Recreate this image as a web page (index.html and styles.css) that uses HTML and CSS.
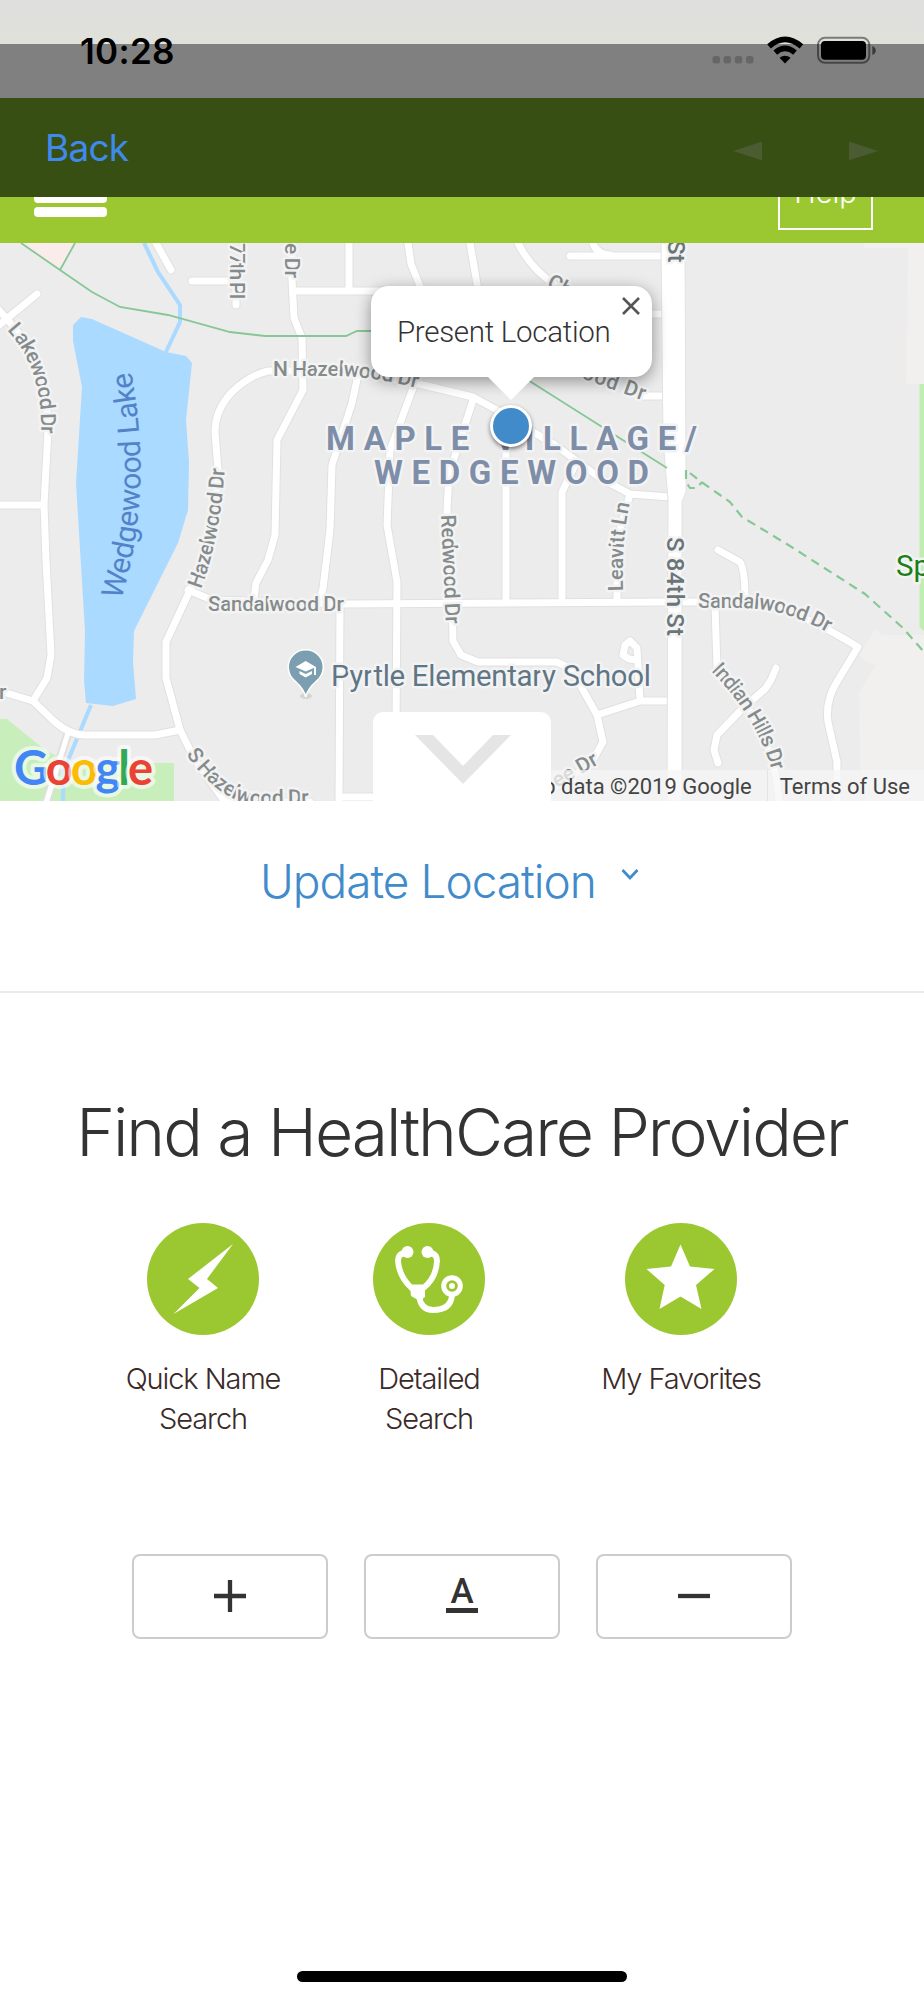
FILE: index.html
```html
<!DOCTYPE html>
<html lang="en">
<head>
  <meta charset="UTF-8" />
  <meta name="viewport" content="width=device-width, initial-scale=1" />
  <title>Find a HealthCare Provider</title>
  <link rel="stylesheet" href="styles.css">
</head>
<body>

  <div class="status-bar">
    <span class="time">10:28</span>
    <svg class="status-icons" width="166" height="30" viewBox="712 35 166 30">
      <g fill="#666">
        <rect x="712.5" y="56" width="7.5" height="7.5" rx="2.5" />
        <rect x="723.5" y="56" width="7.5" height="7.5" rx="2.5" />
        <rect x="734.8" y="56" width="7.5" height="7.5" rx="2.5" />
        <rect x="746" y="56" width="7.5" height="7.5" rx="2.5" />
      </g>
      <path d="M769 46.3 Q785 32.5 801.4 46.3 M775.3 52.6 Q785 44.2 795 52.6" fill="none" stroke="#000" stroke-width="5.6" />
      <path d="M779.5 57.8 Q785 53.6 790.6 57.8 L785 63.4 Z" />
      <rect x="818" y="37.8" width="51.3" height="25" rx="7" fill="none" stroke="#000" stroke-opacity=".45" stroke-width="2" />
      <rect x="821" y="41" width="45" height="18.8" rx="4" />
      <path d="M872.3 46 Q875.8 47.5 875.8 50.5 T872.3 55 Z" fill-opacity=".55" />
    </svg>
  </div>

  <div class="nav-bar">
    <a class="back">Back</a>
    <svg width="147" height="20" viewBox="732 141 147 20" fill="#4b5c33">
      <path d="M733 151 L762 141.5 V160.3 Z" />
      <path d="M878 151 L849 141.5 V160.3 Z" />
    </svg>
  </div>

  <header class="site-header">
    <div class="menu"><span></span><span></span><span></span></div>
    <a class="help">Help</a>
  </header>

  <div class="map">
    <svg class="map-canvas" width="924" height="558" viewBox="0 243 924 558">
      <defs>
        <path id="p-lakewood" d="M7 330 Q43 368 41 434" />
        <path id="p-hazel" d="M201 589 Q221 535 225 465" />
        <path id="p-nhazel" d="M273 376 L340 376 Q382 378 420 389" />
        <path id="p-shazel" d="M186 754 Q222 806 262 805 L330 804" />
        <path id="p-sandal2" d="M698 608 L740 608 Q785 608 830 634" />
        <path id="p-indian" d="M711 671 Q764 725 775 785" />
        <path id="p-lake" d="M121 600 Q155 490 130 366" />
        <path id="p-leavitt" d="M623 591 Q621 540 631 498" />
        <!-- every street once, drawn as casing and as fill -->
        <g id="streets">
          <path d="M156 243 L171 270 M192 281 H236 V305 M-2 326 L37 294 M-2 309 L12 325 Q48 365 48 430 L44 505 L46 560 L51 655 L47 678 L33 701 M0 505 H44" />
          <path d="M0 691 L33 701 L55 722 Q70 735 85 735 H155 L180 730" />
          <path d="M280 371 H268 Q250 375 232 392 Q215 410 215 432 L218 470 Q216 540 190 590 L166 642 V678 L180 730 L195 760 L225 802 H310" />
          <path d="M292 243 V280 L294 318 L302 338 L303 390 L277 440 L275 535 L268 560 L256 583 L254 598 M295 291 H430 M349 243 V291" />
          <path d="M408 243 L411 264 L420 286 M470 243 L478 290 M518 243 Q530 268 555 285 M593 243 Q596 254 610 255 M570 256 H664 M640 314 H664 M640 396 H664" />
          <path d="M275 371 H340 L415 383 L473 397 L495 409 L555 445 L600 478 L630 494 L670 497" />
          <path d="M358 375 L352 403 L332 465 L330 530 L323 588 L320 601 M413 388 L390 450 L387 525 L397 582 L396 730 M473 400 L449 474 L447 510 L452 600 L453 641 L461 655 L478 662 H557 L571 669 L583 690 L597 715 L603 742 L590 765 L550 790" />
          <path d="M506 448 V602 M575 465 L562 492 V602 M617 602 V540 L630 494" />
          <path d="M188 590 L212 600 L343 604 L667 602 H745 Q790 605 858 647 L838 680 Q825 700 828 722 L837 762 V802 M718 550 L740 562 Q745 570 745 600 M715 605 L717 668 Q775 730 779 802" />
          <path d="M776 668 L771 680 L765 689 L740 711 L717 735 L714 750 L718 763 M597 715 L640 701 H670 M640 701 L637 648 L630 641 L625 645 L623 655 L629 659 L636 660 M340 604 L339 802 M339 797 H380" />
        </g>
      </defs>

      <rect y="243" width="924" height="558" fill="#ececec" />
      <path d="M21 243 L60 270 L75 243 Z" fill="#fbecec" />
      <path d="M864 243 H924 V384 H906 L908 248 H864 Z M875 629 L882 635 H924 V801 H867 L860 765 L859 693 L875 666 L859 656 Z" fill="#f1f0ef" />
      <path d="M919.500 384 H924 V631 L919.500 627 Z" fill="#bfeeb0" />
      <path d="M0 719 H7 L45 750 L70 763 H174 V801 H0 Z" fill="#c8eebb" />
      <path d="M144 243 L158 272 L180 305 V322 L166 352 M91 705 L64 770 L63 801" fill="none" stroke="#aadaff" stroke-width="4" />
      <path d="M73 325 L81 317 L92 319 L166 352 L186 356 L192 363 L186 420 L189 462 L188 510 L178 543 L134 631 L133 662 L136 699 L113 706 L86 703 L84 680 L85 631 L76 483 L82 387 L73 341 Z" fill="#aadaff" />

      <use href="#streets" class="street-casing" />
      <path d="M68 733 L46 803" class="street-casing" />
      <use href="#streets" class="street" />
      <path d="M68 733 L46 803" class="street thin" />
      <path d="M661 243 H685 L686 470 L686 492 L682 502 V801 H667 L668 500 L663 440 Z" fill="#fff" stroke="#e2e2e2" />

      <g fill="none" stroke="#87c795" stroke-width="1.8">
        <path d="M75 243 L60 270 M21 243 L60 270 L92 292 L120 307 L168 315 L230 332 L265 336 H346 L357 331 H420 M520 375 L667 468" />
        <path d="M686 470 V482 L690 488 L697 488 L702 482 M690 473 L700 481 L730 502 L742 517 L762 529 L790 546 L865 594 L903 628 L924 652" stroke-width="2.2" stroke-dasharray="9 6" />
      </g>

      <g class="label">
        <text><textPath href="#p-lakewood" textLength="112">Lakewood Dr</textPath></text>
        <text><textPath href="#p-hazel" textLength="123">Hazelwood Dr</textPath></text>
        <text><textPath href="#p-nhazel" textLength="145">N Hazelwood Dr</textPath></text>
        <text><textPath href="#p-shazel" textLength="142">S Hazelwood Dr</textPath></text>
        <text x="208" y="611" textLength="136">Sandalwood Dr</text>
        <text><textPath href="#p-sandal2" textLength="134">Sandalwood Dr</textPath></text>
        <text><textPath href="#p-indian" textLength="118">Indian Hills Dr</textPath></text>
        <text><textPath href="#p-leavitt" textLength="88">Leavitt Ln</textPath></text>
        <text transform="translate(441 515) rotate(87.500)" textLength="109">Redwood Dr</text>
        <text transform="translate(230 243) rotate(90)" textLength="56">77th Pl</text>
        <text transform="translate(285 243) rotate(90)" textLength="35">e Dr</text>
        <text transform="translate(546 286) rotate(28)">Ch</text>
        <text transform="translate(581 378) rotate(20)" textLength="66">ood Dr</text>
        <text transform="translate(557 788) rotate(-30)">ee Dr</text>
        <text x="-1" y="699">r</text>
      </g>
      <g class="label main">
        <text transform="translate(667 537) rotate(90)" textLength="99">S 84th St</text>
        <text transform="translate(668 240) rotate(90)">St</text>
      </g>
      <text class="lake-label"><textPath href="#p-lake" textLength="231">Wedgewood Lake</textPath></text>
      <g class="area-label">
        <text x="326" y="450" textLength="371">MAPLE VILLAGE/</text>
        <text x="374" y="483.500" textLength="275">WEDGEWOOD</text>
      </g>

      <ellipse cx="306" cy="696" rx="6" ry="3" fill="#d4d4d4" />
      <path d="M305.700 697 Q304 689 295 681 A17.500 17.500 0 1 1 316.500 681 Q307.500 689 305.700 697 Z" fill="#7b9eb0" stroke="#fff" stroke-width="1.500" />
      <path d="M295.500 667 L305.700 661 L316 667 L305.700 671.500 Z M299.500 671 L305.700 674 L312 671 V674 L305.700 677.500 L299.500 674 Z M314 667 H316 V675 H314 Z" fill="#fff" />
      <text class="poi-label" x="331" y="686" textLength="320">Pyrtle Elementary School</text>
      <text class="poi-label park" x="896" y="576">Sp</text>
      <text class="google" x="14" y="784.500" textLength="139"><tspan fill="#4285f4">G</tspan><tspan fill="#ea4335">o</tspan><tspan fill="#fbbc05">o</tspan><tspan fill="#4285f4">g</tspan><tspan fill="#34a853">l</tspan><tspan fill="#ea4335">e</tspan></text>
    </svg>

    <div class="marker"></div>

    <div class="popup">
      Present Location
      <svg class="popup-close" width="18" height="18" viewBox="0 0 18 18">
        <path d="M1 1 L17 17 M17 1 L1 17" stroke="#555" stroke-width="2.600" />
      </svg>
    </div>

    <div class="credits">
      <span class="data">Map data ©2019 Google</span>
      <span class="terms">Terms of Use</span>
    </div>

    <div class="map-toggle">
      <svg width="96" height="49" viewBox="0 0 96 49">
        <path d="M0 0 H18 L48 31 L78 0 H96 L48 49 Z" fill="#e5e5e5" />
      </svg>
    </div>
  </div>

  <div class="update-location">
    <a>Update Location</a>
    <svg width="18" height="13" viewBox="0 0 18 13">
      <path d="M1.500 2 L9 10 L16.500 2" fill="none" stroke="#428bca" stroke-width="2.800" />
    </svg>
  </div>

  <h1>Find a HealthCare Provider</h1>

  <div class="options">
    <a class="option quick">
      <svg width="112" height="112" viewBox="0 0 112 112">
        <circle cx="56" cy="56" r="56" />
        <path d="M86 21 L60 56 L71 65 L26.500 91 L52.500 65 L41 56 Z" fill="#fff" />
      </svg>
      <span>Quick Name Search</span>
    </a>
    <a class="option detailed">
      <svg width="112" height="112" viewBox="0 0 112 112">
        <circle cx="56" cy="56" r="56" />
        <g fill="none" stroke="#fff" stroke-width="5.800">
          <path d="M34 29.500 Q25 30 25 38 Q26 53 38 64.500 H51 Q63 55 64 38 Q64 30 55 29.500" />
          <path d="M46 73 Q48 87 60 87 Q78 87 79 72" />
          <circle cx="79" cy="63" r="8.300" stroke-width="5" />
        </g>
        <path d="M37 64 H52 V74 L47 78 L38 73 Z" fill="#fff" />
        <circle cx="34.500" cy="29" r="6" class="white" />
        <circle cx="54.500" cy="29" r="6" class="white" />
        <circle cx="79" cy="63" r="3" class="white" />
      </svg>
      <span>Detailed Search</span>
    </a>
    <a class="option favorites">
      <svg width="112" height="112" viewBox="0 0 112 112">
        <circle cx="56" cy="56" r="56" />
        <path d="M55.500 21.500 L65 43.500 L89.500 46 L71 62 L76.500 86 L55.500 73.500 L34.500 86 L39.700 62 L21.500 46 L46 43.500 Z" fill="#fff" />
      </svg>
      <span>My Favorites</span>
    </a>
  </div>

  <div class="font-size">
    <button>
      <svg width="32" height="32" viewBox="0 0 32 32"><path d="M0 16 H32 M16 0 V32" stroke="#333" stroke-width="4.300" /></svg>
    </button>
    <button>
      <span class="letter">A</span>
    </button>
    <button>
      <svg width="32" height="32" viewBox="0 0 32 32"><path d="M0 16 H32" stroke="#333" stroke-width="4.300" /></svg>
    </button>
  </div>

  <div class="home-indicator"></div>

</body>
</html>
```
FILE: styles.css
```css
* {
  box-sizing: border-box;
}
body {
  margin: 0;
  height: 2000px;
  display: flex;
  flex-direction: column;
  font-family: Inter, "Liberation Sans", sans-serif;
  font-weight: 300;
  background: #fff;
  color: #333;
}
svg {
  display: block;
  flex: none;
}
.status-bar {
  height: 98px;
  display: flex;
  justify-content: space-between;
  align-items: flex-start;
  padding: 35px 46px 0 80px;
  background: linear-gradient(#dfdfdf 0, #dfe1d9 44.500px, #808080 44.500px, #808080 98px);
}
.time {
  font-size: 35px;
  line-height: 32px;
  font-weight: 600;
  letter-spacing: .3px;
  color: #000;
}
.nav-bar {
  height: 99px;
  display: flex;
  justify-content: space-between;
  align-items: center;
  padding: 6px 45px 0 45px;
  background: #384f14;
}
.back {
  font-size: 37px;
  line-height: 40px;
  font-weight: 400;
  letter-spacing: -.8px;
  margin-top: -6px;
  color: #3f8aec;
}
.site-header {
  height: 46px;
  display: flex;
  justify-content: space-between;
  align-items: flex-end;
  padding: 0 51px 13px 34px;
  background: #9bc831;
  overflow: hidden;
}
.menu {
  display: flex;
  flex-direction: column;
  gap: 4px;
  padding-bottom: 13px;
}
.menu span {
  width: 73px;
  height: 10px;
  border-radius: 4px;
  background: #fff;
}
.help {
  width: 95px;
  height: 70px;
  flex: none;
  border: 2px solid #fff;
  color: #fff;
  font-size: 29px;
  line-height: 61px;
  text-align: center;
}

/* map */
.map {
  position: relative;
  height: 558px;
  overflow: hidden;
  font-family: Roboto, sans-serif;
}
.street-casing,
.street {
  fill: none;
  stroke-linecap: round;
  stroke-linejoin: round;
}
.street-casing {
  stroke: #e0e0e0;
  stroke-width: 9px;
}
.street {
  stroke: #fff;
  stroke-width: 7px;
}
.street.thin {
  stroke-width: 5px;
}
.map-canvas text {
  paint-order: stroke;
  stroke: #f3f3f3;
  stroke-width: 5px;
  stroke-linejoin: round;
}
.label {
  font-size: 21px;
  font-weight: 500;
  fill: #858b8c;
}
.label.main {
  font-size: 24px;
  fill: #6a7579;
}
.map-canvas .lake-label {
  font-size: 30px;
  font-weight: 400;
  fill: #5283c9;
  stroke: none;
}
.area-label {
  font-size: 33px;
  font-weight: 700;
  fill: #7e8ea8;
}
.poi-label {
  font-size: 29.500px;
  font-weight: 400;
  fill: #5f7686;
}
.poi-label.park {
  fill: #188018;
}
.map-canvas .google {
  font-family: Lato, sans-serif;
  font-size: 47px;
  font-weight: 700;
  stroke: rgba(255, 255, 255, .6);
  stroke-width: 8px;
}
.marker {
  position: absolute;
  left: 490px;
  top: 162px;
  width: 42px;
  height: 42px;
  border: 3px solid #fff;
  border-radius: 50%;
  background: #428bca;
  box-shadow: 0 2px 4px rgba(0, 0, 0, .5);
}
.popup {
  position: absolute;
  left: 371px;
  top: 43px;
  width: 281px;
  height: 91px;
  border-radius: 18px;
  padding-left: 26px;
  background: #fff;
  font-size: 29.500px;
  letter-spacing: -.3px;
  line-height: 92px;
  white-space: nowrap;
  box-shadow: 0 4px 16px rgba(0, 0, 0, .4);
}
.popup::after {
  content: "";
  position: absolute;
  left: 116px;
  top: 90px;
  border: 24px solid transparent;
  border-top-color: #fff;
  border-bottom: 0;
}
.popup-close {
  position: absolute;
  right: 12px;
  top: 11px;
}
.credits {
  position: absolute;
  right: 0;
  bottom: 0;
  height: 31px;
  display: flex;
  background: rgba(245, 245, 245, .75);
  color: #444;
  font-size: 22px;
  font-weight: 400;
  line-height: 34px;
  white-space: nowrap;
}
.credits .data {
  padding: 0 15px 0 12px;
  border-right: 1px solid #e4e4e4;
}
.credits .terms {
  padding: 0 14px 0 12px;
}
.map-toggle {
  position: absolute;
  left: 373px;
  bottom: 0;
  width: 178px;
  height: 89px;
  padding: 23px 42px 0;
  border-radius: 10px 10px 0 0;
  background: #fff;
}

.update-location {
  height: 192px;
  display: flex;
  padding: 53px 0 0 260px;
  border-bottom: 2px solid #eaeaea;
  font-size: 46px;
  line-height: 54px;
  letter-spacing: -1px;
  color: #428bca;
}
.update-location svg {
  margin: 14px 0 0 25px;
}
h1 {
  margin: 99px 0 0;
  font-size: 66px;
  font-weight: 300;
  line-height: 80px;
  letter-spacing: -2.050px;
  text-align: center;
  white-space: nowrap;
}
.options {
  display: flex;
  margin-top: 51px;
  height: 260px;
  padding-left: 113px;
}
.option {
  display: flex;
  flex-direction: column;
  align-items: center;
  gap: 24px;
  font-size: 29px;
  line-height: 40px;
  letter-spacing: -1.100px;
  text-align: center;
  color: #3b2a28;
}
.option svg {
  fill: #9bc831;
}
.option .white {
  fill: #fff;
}
.quick {
  width: 180px;
}
.detailed {
  width: 110px;
  margin-left: 81px;
}
.favorites {
  width: 180px;
  margin-left: 107px;
}
.font-size {
  display: flex;
  justify-content: center;
  gap: 36px;
  margin-top: 71px;
}
.font-size button {
  width: 196px;
  height: 85px;
  display: flex;
  justify-content: center;
  align-items: center;
  padding: 0 0 2px;
  border: 2px solid #ccc;
  border-radius: 8px;
  background: #fff;
}
.letter {
  width: 32px;
  height: 34px;
  border-bottom: 5px solid #333;
  font: 500 35px/25px Roboto, sans-serif;
  color: #333;
}
.home-indicator {
  width: 330px;
  height: 11px;
  margin: auto auto 18px;
  border-radius: 6px;
  background: #000;
}
```
